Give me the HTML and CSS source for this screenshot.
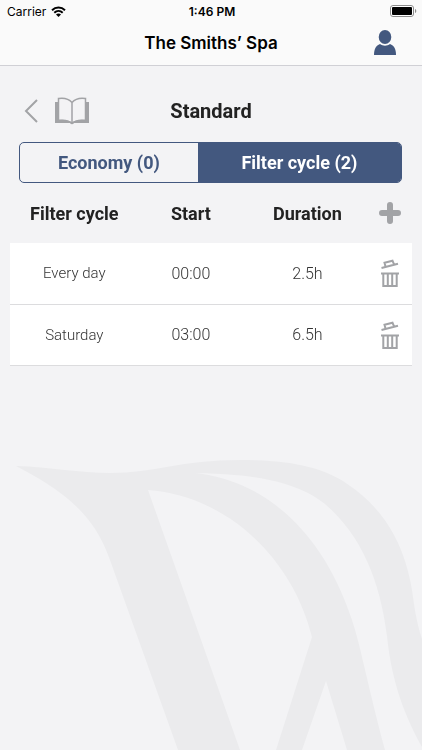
FILE: index.html
```html
<!DOCTYPE html>
<html lang="en">
<head>
    <meta charset="UTF-8">
    <meta name="viewport" content="width=device-width, initial-scale=1.0">
    <title>The Smiths’ Spa</title>
    <link rel="stylesheet" href="styles.css">
</head>
<body>

<svg class="watermark" viewBox="0 0 422 310" aria-hidden="true">
    <path fill="#ebebed" fill-rule="evenodd" d="M16 26C50 27 80 33 110 33C155 33 180 20 241 20C280 20 315 24 343 41C380 65 407 100 414 164C416 178 419 190 422 199V307C406 278 392 245 387 196C380 140 361 95 325 64C295 40 250 34 196 33C270 42 325 97 352 180C361 207 366 239 385 310H347L326 241L302 310H276L312 197C294 122 230 56 148 50L240 310H178L110 120C94 73 62 50 16 26Z"/>
</svg>

<header class="topbar">
    <div class="status">
        <div class="carrier">
            <span>Carrier</span>
            <svg width="15" height="11" viewBox="0 0 15 11" aria-hidden="true">
                <path fill="none" stroke="#000" stroke-width="2" d="M1 4.200C4.700 .7 10.300 .7 14 4.200M3.300 6.700C5.700 4.500 9.300 4.500 11.700 6.700"/>
                <path d="M5 8.400C6.400 7.100 8.600 7.100 10 8.400L7.500 11Z"/>
            </svg>
        </div>
        <span class="time">1:46 PM</span>
        <svg class="battery" width="27" height="12" viewBox="0 0 27 12" aria-hidden="true">
            <rect x=".5" y=".5" width="23" height="11" rx="2.500" fill="#fff" stroke="#8c8c8c"/>
            <rect x="2" y="2" width="20" height="8" rx="1"/>
            <path fill="#8c8c8c" d="M25 4C26.700 4.500 26.700 7.500 25 8Z"/>
        </svg>
    </div>
    <div class="navbar">
        <h1>The Smiths’ Spa</h1>
        <button type="button" class="icon-button" aria-label="Account">
            <svg width="22" height="25" viewBox="0 0 22 25" fill="#43587f">
                <ellipse cx="11" cy="7" rx="6.300" ry="7"/>
                <path d="M0 25C0 19 2 15.500 6 14C9 16.200 13 16.200 16 14C20 15.500 22 19 22 25Z"/>
            </svg>
        </button>
    </div>
</header>

<main>
    <div class="heading">
        <div class="tools">
            <button type="button" class="icon-button" aria-label="Back">
                <svg width="14" height="24" viewBox="0 0 14 24" fill="none" stroke="#a2a3a6" stroke-width="2">
                    <path d="M13 1L2 12L13 23"/>
                </svg>
            </button>
            <button type="button" class="icon-button" aria-label="Manual">
                <svg width="34" height="28" viewBox="0 0 34 28" fill="none" stroke="#a2a3a6">
                    <path stroke-width="1.500" d="M17 5.500C14 2 9 .7 3.500 1.500V23.500C9 22.700 14 23.500 17 26.500C20 23.500 25 22.700 30.500 23.500V1.500C25 .7 20 2 17 5.500V26"/>
                    <path fill="#a2a3a6" stroke="none" d="M0 5H3V23C9 22.500 14 23.300 17 25.500C20 23.300 25 22.500 31 23V5H34V26H19C18 27.300 16 27.300 15 26H0Z"/>
                </svg>
            </button>
        </div>
        <h2>Standard</h2>
    </div>

    <div class="tabs">
        <button type="button" class="tab economy">Economy (0)</button>
        <button type="button" class="tab filter active">Filter cycle (2)</button>
    </div>

    <table class="cycles">
        <thead>
            <tr>
                <th class="wide">Filter cycle</th>
                <th class="medium">Start</th>
                <th class="wide">Duration</th>
                <td class="action">
                    <button type="button" class="icon-button" aria-label="Add filter cycle">
                        <svg width="24" height="24" viewBox="0 0 24 24" stroke="#a2a3a6" stroke-width="6" stroke-linecap="round">
                            <path d="M12 4V20M4 12H20"/>
                        </svg>
                    </button>
                </td>
            </tr>
        </thead>
        <tbody>
            <tr>
                <td class="day">Every day</td>
                <td>00:00</td>
                <td>2.5h</td>
                <td class="action">
                    <button type="button" class="icon-button" aria-label="Delete Every day">
                        <svg width="18" height="28" viewBox="0 0 18 28" fill="none" stroke="#a2a3a6" stroke-width="2">
                            <path d="M.5 9L17 4.700M4.500 7.500L3.500 3.800L11.500 1.700L13 5.300"/>
                            <path d="M0 14.500H18M2.300 14.500V27H15.700V14.500M6.800 15V27M11.200 15V27"/>
                        </svg>
                    </button>
                </td>
            </tr>
            <tr>
                <td class="day">Saturday</td>
                <td>03:00</td>
                <td>6.5h</td>
                <td class="action">
                    <button type="button" class="icon-button" aria-label="Delete Saturday">
                        <svg width="18" height="28" viewBox="0 0 18 28" fill="none" stroke="#a2a3a6" stroke-width="2">
                            <path d="M.5 9L17 4.700M4.500 7.500L3.500 3.800L11.500 1.700L13 5.300"/>
                            <path d="M0 14.500H18M2.300 14.500V27H15.700V14.500M6.800 15V27M11.200 15V27"/>
                        </svg>
                    </button>
                </td>
            </tr>
        </tbody>
    </table>
</main>

</body>
</html>
```
FILE: styles.css
```css
* {
    box-sizing: border-box;
}
body {
    margin: 0;
    min-height: 100vh;
    background-color: #f3f3f5;
    color: #222;
    font-family: Roboto, sans-serif;
}
svg {
    display: block;
}
button {
    font: inherit;
    cursor: pointer;
}
.icon-button {
    padding: 0;
    border: 0;
    background: none;
}
.watermark {
    position: fixed;
    bottom: 0;
    left: 0;
    z-index: -1;
    width: 100%;
}

/* Top bar */
.topbar {
    background-color: #fafafa;
    border-bottom: 1px solid #d0d0d5;
    color: #000;
    font-family: Inter, sans-serif;
}
.status {
    display: grid;
    grid-template-columns: 1fr auto 1fr;
    align-items: center;
    height: 22px;
    padding: 0 5px 0 7px;
    font-size: 12px;
}
.carrier {
    display: flex;
    align-items: center;
    gap: 5px;
}
.time {
    font-weight: 600;
}
.battery {
    justify-self: end;
}
.navbar {
    display: grid;
    grid-template-columns: 1fr auto 1fr;
    align-items: center;
    height: 43px;
    padding: 0 26px 2px;
}
.navbar h1 {
    grid-column: 2;
    margin: 0;
    font-size: 17px;
    font-weight: 600;
}
.navbar .icon-button {
    justify-self: end;
}

/* Content */
main {
    padding: 27px 10px 0;
}
.heading {
    display: grid;
    grid-template-columns: 1fr auto 1fr;
    align-items: center;
    height: 36px;
    padding: 0 14px;
}
.heading h2 {
    margin: 0;
    font-size: 20px;
    font-weight: 700;
}
.tools {
    display: flex;
    align-items: center;
    gap: 17px;
}
.tabs {
    display: flex;
    height: 41px;
    margin: 13px 10px 0 9px;
    border: 1px solid #43587f;
    border-radius: 5px;
    overflow: hidden;
}
.tab {
    padding: 0;
    border: 0;
    background: none;
    color: #43587f;
    font-size: 18px;
    font-weight: 700;
}
.economy {
    flex: 7;
}
.filter {
    flex: 8;
}
.active {
    background-color: #43587f;
    color: #fff;
}

/* Filter cycles */
.cycles {
    width: 100%;
    table-layout: fixed;
    border-collapse: collapse;
    text-align: center;
}
.cycles th,
.cycles td {
    padding: 0;
}
.cycles thead tr {
    height: 60px;
}
.cycles th {
    font-size: 18px;
    font-weight: 700;
}
.cycles tbody tr {
    height: 61px;
    background-color: #fff;
    border-bottom: 1px solid #dcdcde;
}
.cycles tbody td {
    color: #333;
    font-size: 16px;
    font-weight: 300;
}
.cycles tbody .day {
    font-size: 15px;
}
.wide {
    width: 32%;
}
.medium {
    width: 26%;
}
.cycles .action {
    padding-right: 4px;
}
.action .icon-button {
    vertical-align: middle;
}
```
